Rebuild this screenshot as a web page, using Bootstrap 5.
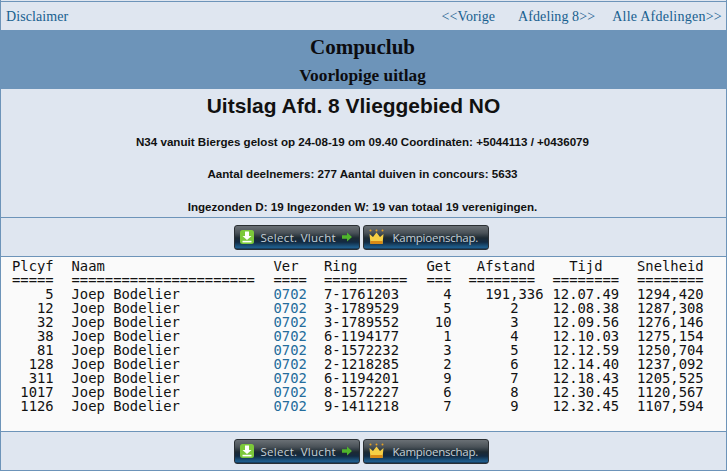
<!DOCTYPE html>
<html lang="nl">
<head>
<meta charset="utf-8">
<title>Uitslag</title>
<link href="https://cdn.jsdelivr.net/npm/bootstrap@5.3.0/dist/css/bootstrap.min.css" rel="stylesheet">
<style>
html,body{height:100%}
body{background:#fff;font-family:"Liberation Serif",serif;color:#111}
.uit-page{height:471px;padding-top:1px;display:flex;flex-direction:column;border-left:1px solid #6d94b9;border-right:1px solid #6d94b9;background:#dfe6f0}
.uit-topbar{border-top:1px solid #6d94b9;height:29px;padding:0 4px 0 5px;font-size:14px}
.uit-topbar a{color:#17608f;text-decoration:none;letter-spacing:.08px}
.uit-links a:nth-child(1){margin-right:23px}
.uit-links a:nth-child(2){margin-right:17px}
.uit-links a:nth-child(3){letter-spacing:.25px}
.uit-head{background:#6d94b9;height:59px;font-weight:700;text-align:center;color:#0c0c10;padding-right:2px}
.uit-h1{height:32px;font-size:21px;line-height:34px}
.uit-h2{height:27px;line-height:27px;font-size:17.3px}
.uit-info{height:128px;font-family:"Liberation Sans",Arial,sans-serif;font-weight:700;text-align:center;color:#111}
.uit-title{font-size:20.95px;line-height:33px;margin:0 0 10.5px;font-weight:700;padding-right:20px}
.uit-line{font-size:11.6px;line-height:18px;margin-bottom:14.5px;padding-right:2px}
.uit-line:last-child{margin-bottom:0}
.uit-btnbar{border-top:1px solid #6d94b9;height:39px;gap:3px;padding-right:5px}
.uit-btn{width:126px;height:25px;border:1px solid #2a2f33;border-radius:3px;background:linear-gradient(#6a7075 0,#4a5258 30%,#1d2a33 52%,#122a42 70%,#1f5f8e 93%,#14324f 100%);color:#c4d0d8;font:11.5px "Open Sans",sans-serif;padding:0 0 0 5px}
.uit-btn span{white-space:nowrap}
.uit-btn svg{flex:none}
.uit-btn-a{gap:7px;letter-spacing:.3px}
.uit-btn-a svg:last-child{margin-left:-1px}
.uit-btn-b{padding-left:5px;gap:9px;letter-spacing:-.25px}
.uit-results{background:#fafafa;border-top:1px solid #6d94b9;height:175px;padding-top:2px;font:13.85px/14px "DejaVu Sans Mono",monospace;color:#111}
.uit-grid{display:grid;grid-template-columns:59.5px 202px 50.5px 102.5px 42px 84px 84.5px 80px;padding-left:11px}
.uit-grid div{white-space:pre;height:14px}
.uit-grid a{color:#246c9c;text-decoration:none}
.uit-foot{height:39px}
.uit-bottom{height:1px;background:#6d94b9}
</style>
</head>
<body>
<div class="uit-page">
  <div class="uit-topbar d-flex justify-content-between align-items-center">
    <a href="#">Disclaimer</a>
    <div class="uit-links d-flex"><a href="#">&lt;&lt;Vorige</a><a href="#">Afdeling 8&gt;&gt;</a><a href="#">Alle Afdelingen&gt;&gt;</a></div>
  </div>
  <div class="uit-head">
    <div class="uit-h1">Compuclub</div>
    <div class="uit-h2">Voorlopige uitlag</div>
  </div>
  <div class="uit-info">
    <h1 class="uit-title">Uitslag Afd. 8 Vlieggebied NO</h1>
    <div class="uit-line">N34 vanuit Bierges gelost op 24-08-19 om 09.40 Coordinaten: +5044113 / +0436079</div>
    <div class="uit-line">Aantal deelnemers: 277 Aantal duiven in concours: 5633</div>
    <div class="uit-line">Ingezonden D: 19 Ingezonden W: 19 van totaal 19 verenigingen.</div>
  </div>
  <div class="uit-btnbar d-flex justify-content-center align-items-center">
    <button class="uit-btn uit-btn-a d-flex align-items-center" type="button"><svg width="14" height="14" viewBox="0 0 14 14"><rect width="14" height="14" rx="2.500" fill="#7cc83a"/><path d="M5 1.500h4V6h2.500L7 10 2.500 6H5z" fill="#fff"/><rect x="2.500" y="10.800" width="9" height="1.600" fill="#fff"/></svg><span>Select. Vlucht</span><svg width="10" height="10" viewBox="0 0 12 11"><path d="M0 3.500h6V0l6 5.500L6 11V7.500H0z" fill="#4fb52c"/></svg></button>
    <button class="uit-btn uit-btn-b d-flex align-items-center" type="button"><svg width="15" height="16" viewBox="0 0 15 16"><circle cx="1.500" cy="1.500" r="1" fill="#e8a020"/><circle cx="7.500" cy="1.500" r="1" fill="#e8a020"/><circle cx="13.500" cy="1.500" r="1" fill="#e8a020"/><path d="M.5 5l3.500 3L7.500 3.500 11 8l3.500-3-1 10h-12z" fill="#f6cf45"/><rect x="1.500" y="12" width="12" height="3" fill="#d98a16"/></svg><span>Kampioenschap.</span></button>
  </div>
  <div class="uit-results">
    <div class="uit-grid" id="uit-g"><div>Plcyf</div><div>Naam</div><div>Ver</div><div>Ring</div><div>Get</div><div> Afstand</div><div>  Tijd</div><div>Snelheid</div><div>=====</div><div>======================</div><div>====</div><div>==========</div><div>===</div><div>========</div><div>========</div><div>========</div><div>    5</div><div>Joep Bodelier</div><div><a href="#">0702</a></div><div>7-1761203</div><div>  4</div><div>  191,336</div><div>12.07.49</div><div>1294,420</div><div>   12</div><div>Joep Bodelier</div><div><a href="#">0702</a></div><div>3-1789529</div><div>  5</div><div>     2</div><div>12.08.38</div><div>1287,308</div><div>   32</div><div>Joep Bodelier</div><div><a href="#">0702</a></div><div>3-1789552</div><div> 10</div><div>     3</div><div>12.09.56</div><div>1276,146</div><div>   38</div><div>Joep Bodelier</div><div><a href="#">0702</a></div><div>6-1194177</div><div>  1</div><div>     4</div><div>12.10.03</div><div>1275,154</div><div>   81</div><div>Joep Bodelier</div><div><a href="#">0702</a></div><div>8-1572232</div><div>  3</div><div>     5</div><div>12.12.59</div><div>1250,704</div><div>  128</div><div>Joep Bodelier</div><div><a href="#">0702</a></div><div>2-1218285</div><div>  2</div><div>     6</div><div>12.14.40</div><div>1237,092</div><div>  311</div><div>Joep Bodelier</div><div><a href="#">0702</a></div><div>6-1194201</div><div>  9</div><div>     7</div><div>12.18.43</div><div>1205,525</div><div> 1017</div><div>Joep Bodelier</div><div><a href="#">0702</a></div><div>8-1572227</div><div>  6</div><div>     8</div><div>12.30.45</div><div>1120,567</div><div> 1126</div><div>Joep Bodelier</div><div><a href="#">0702</a></div><div>9-1411218</div><div>  7</div><div>     9</div><div>12.32.45</div><div>1107,594</div></div>
  </div>
  <div class="uit-btnbar uit-foot d-flex justify-content-center align-items-center">
    <button class="uit-btn uit-btn-a d-flex align-items-center" type="button"><svg width="14" height="14" viewBox="0 0 14 14"><rect width="14" height="14" rx="2.500" fill="#7cc83a"/><path d="M5 1.500h4V6h2.500L7 10 2.500 6H5z" fill="#fff"/><rect x="2.500" y="10.800" width="9" height="1.600" fill="#fff"/></svg><span>Select. Vlucht</span><svg width="10" height="10" viewBox="0 0 12 11"><path d="M0 3.500h6V0l6 5.500L6 11V7.500H0z" fill="#4fb52c"/></svg></button>
    <button class="uit-btn uit-btn-b d-flex align-items-center" type="button"><svg width="15" height="16" viewBox="0 0 15 16"><circle cx="1.500" cy="1.500" r="1" fill="#e8a020"/><circle cx="7.500" cy="1.500" r="1" fill="#e8a020"/><circle cx="13.500" cy="1.500" r="1" fill="#e8a020"/><path d="M.5 5l3.500 3L7.500 3.500 11 8l3.500-3-1 10h-12z" fill="#f6cf45"/><rect x="1.500" y="12" width="12" height="3" fill="#d98a16"/></svg><span>Kampioenschap.</span></button>
  </div>
  <div class="uit-bottom"></div>
</div>
<script src="https://cdn.jsdelivr.net/npm/bootstrap@5.3.0/dist/js/bootstrap.bundle.min.js"></script>
</body>
</html>
